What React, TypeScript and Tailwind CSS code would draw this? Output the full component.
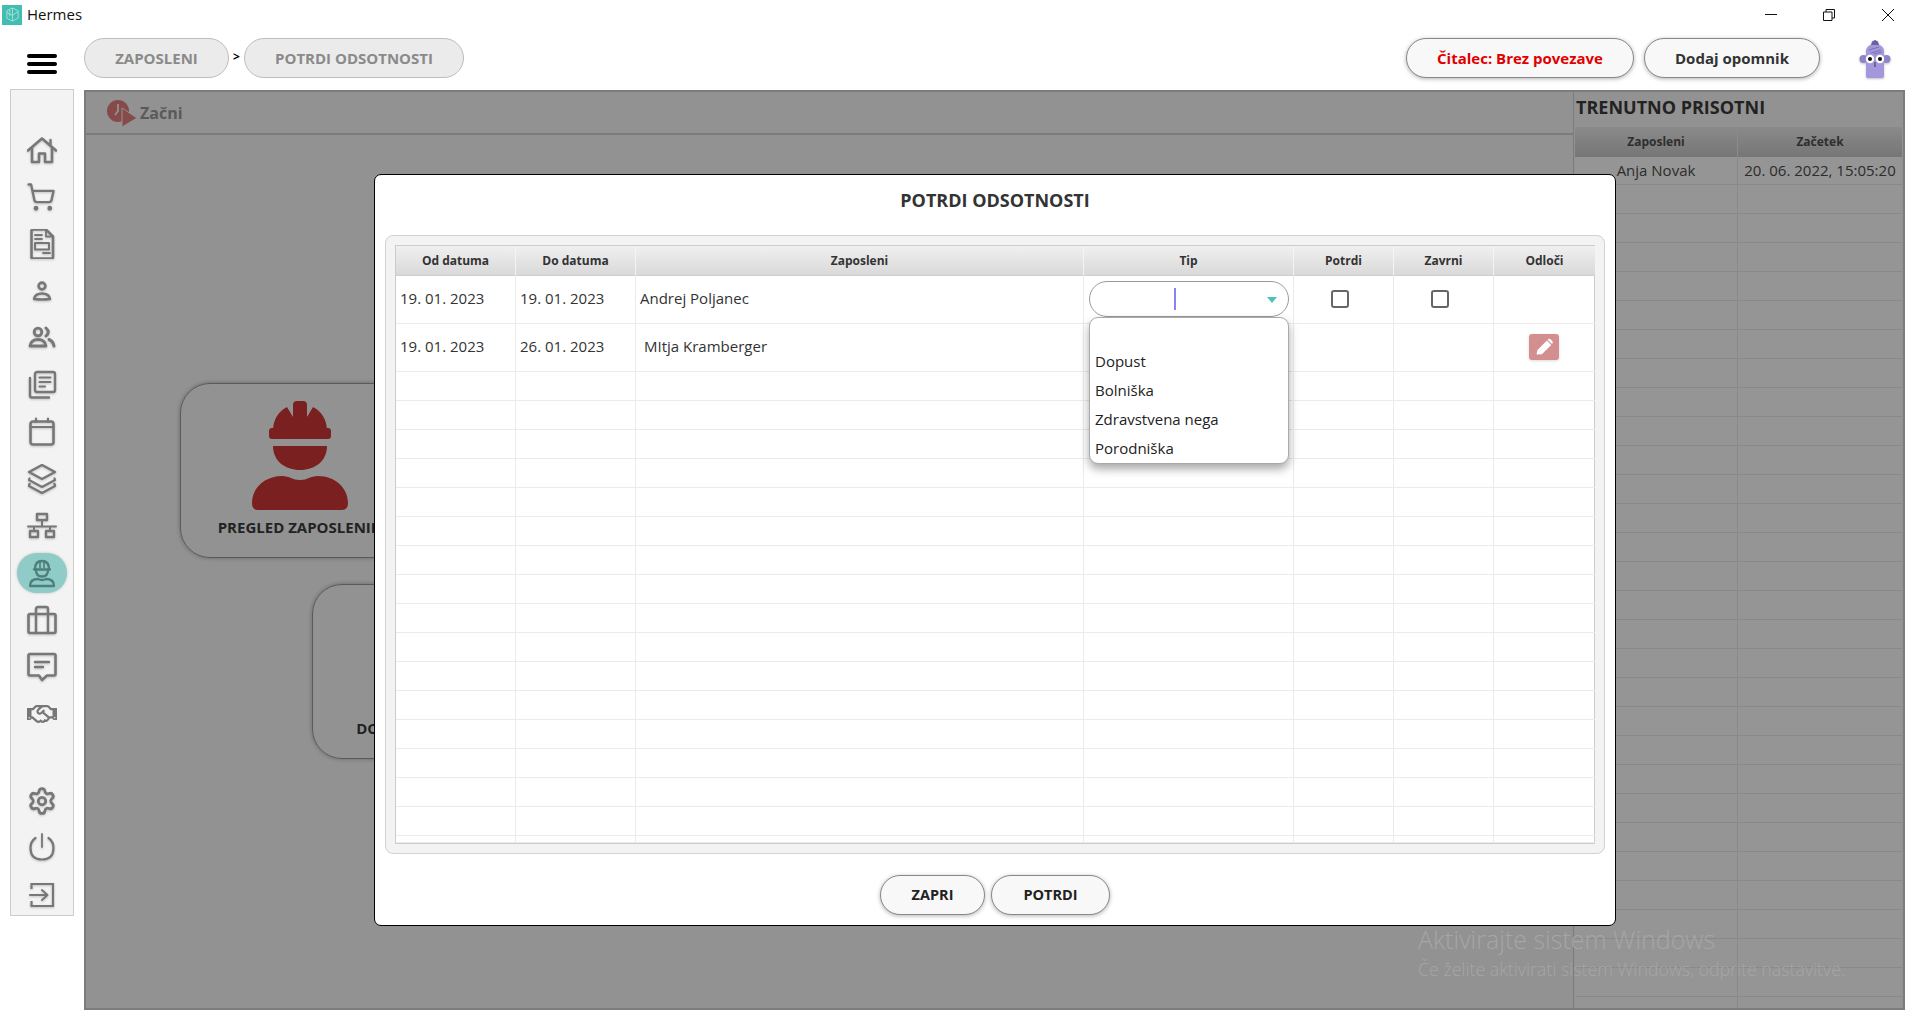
import React from "react";
import { ShoppingCart, Settings } from "lucide-react";
import { FaRegHandshake } from "react-icons/fa";

const ic = "w-[30px] h-[30px] text-[#777777] drop-shadow-[0_1px_1px_rgba(0,0,0,0.2)]";
const S = ({ children }: { children: React.ReactNode }) => (
  <svg viewBox="0 0 30 30" fill="none" stroke="currentColor" strokeWidth="2.4" strokeLinecap="round" strokeLinejoin="round" className={ic}>{children}</svg>
);

const Home = () => (
  <S>
    <path d="M1 15.5L15 3.5L29 15.5" strokeWidth="2.6" />
    <path d="M23.5 5V10" strokeWidth="2.4" />
    <path d="M5 13V27H12V18.5H18V27H25V13" strokeWidth="2.6" />
  </S>
);
const Doc = () => (
  <S>
    <path d="M6 0.5H19L26 7.5V28Q26 29.5 24.5 29.5H6Q4.5 29.5 4.5 28V2Q4.5 0.5 6 0.5Z" strokeWidth="2.6" />
    <path d="M19 1V7.5H25.5M8 6H15M8 10H15M16 24H23" strokeWidth="1.8" />
    <rect x="8" y="14" width="14" height="6.5" strokeWidth="2" />
  </S>
);
const User = () => (
  <S>
    <circle cx="15" cy="10" r="3.4" strokeWidth="2.6" />
    <path d="M7 23Q8 17.5 15 17.5Q22 17.5 23 23Q15 24 7 23Z" strokeWidth="2.4" />
  </S>
);
const Users = () => (
  <S>
    <circle cx="11" cy="9" r="3.8" strokeWidth="2.8" />
    <path d="M19 5Q23.5 9 19 13" strokeWidth="3" />
    <path d="M3 23Q4 16.5 11 16.5Q18 16.5 19 23Z" strokeWidth="2.8" />
    <path d="M22 16.5Q26 18 27 23" strokeWidth="3" />
  </S>
);
const News = () => (
  <S>
    <rect x="8" y="2" width="20" height="20" rx="2" />
    <path d="M12.5 7.5H23.5M12.5 12H23.5M12.5 16.5H18" strokeWidth="2.2" />
    <path d="M3 8V25.5Q3 27.5 5 27.5H22" />
  </S>
);
const Cal = () => (
  <S>
    <rect x="3.5" y="4.5" width="23" height="23" rx="2.5" strokeWidth="2.6" />
    <path d="M3.5 10H26.5M9 1.5V5M21 1.5V5" strokeWidth="2.2" />
  </S>
);
const Layers = () => (
  <S>
    <path d="M15 1L28 8L15 15L2 8Z" />
    <path d="M2.5 14.5L2 16L15 23L28 16L27.5 14.5" strokeWidth="2.2" />
    <path d="M2.5 20L2 22L15 29L28 22L27.5 20" strokeWidth="2.4" />
  </S>
);
const Net = () => (
  <S>
    <rect x="10" y="3" width="10" height="6" strokeWidth="2.4" />
    <rect x="3" y="20" width="8" height="6" strokeWidth="2.4" />
    <rect x="19" y="20" width="8" height="6" strokeWidth="2.4" />
    <path d="M15 9V15.5M1 15.5H29M7 15.5V20M23 15.5V20" strokeWidth="2" />
  </S>
);
const HatUser = () => (
  <svg viewBox="0 0 30 30" fill="none" stroke="#4d7f7c" strokeWidth="2.3" strokeLinecap="round" strokeLinejoin="round" className="w-[30px] h-[30px]">
    <path d="M8 11Q8 3 15 3Q22 3 22 11" />
    <path d="M13 3.5V10M17 3.5V10" strokeWidth="1.6" />
    <path d="M7 11.5H23" />
    <path d="M9 12Q9 18.5 15 18.5Q21 18.5 21 12" />
    <path d="M3 28Q3 21 11 21Q15 23 19 21Q27 21 27 28Z" />
  </svg>
);
const Brief = () => (
  <S>
    <rect x="1.5" y="9" width="27" height="19" rx="1.5" strokeWidth="2.6" />
    <path d="M9 9V4Q9 2 11 2H19Q21 2 21 4V9M9 9V28M21 9V28" strokeWidth="2.4" />
  </S>
);
const Msg = () => (
  <S>
    <path d="M3 2H27Q28.5 2 28.5 3.5V22Q28.5 23.5 27 23.5H20L15 28L12 23.5H3Q1.5 23.5 1.5 22V3.5Q1.5 2 3 2Z" strokeWidth="2.6" />
    <path d="M8 10H22M8 15H16" strokeWidth="2.4" />
  </S>
);
const Power = () => (
  <S>
    <path d="M15 1V14" strokeWidth="1.8" />
    <path d="M8.5 5Q3.5 8.5 3.5 15Q3.5 26.5 15 26.5Q26.5 26.5 26.5 15Q26.5 8.5 21.5 5" strokeWidth="2.2" />
  </S>
);
const Enter = () => (
  <S>
    <path d="M4.5 9V4H26V26H4.5V21" strokeWidth="2.2" strokeLinecap="butt" strokeLinejoin="miter" />
    <path d="M3 15H20M15 10L20.5 15L15 20" strokeWidth="2" />
  </S>
);

const top = [
  <Home key="a" />,
  <ShoppingCart key="b" className={`${ic} -translate-x-[1px]`} strokeWidth={1.9} />,
  <Doc key="c" />,
  <User key="d" />,
  <Users key="e" />,
  <News key="f" />,
  <Cal key="g" />,
  <Layers key="h" />,
  <Net key="i" />,
];
const mid = [<Brief key="j" />, <Msg key="k" />, <FaRegHandshake key="l" className="w-[30px] h-[30px] text-[#777777]" />];
const bottom = [<Settings key="m" className={ic} strokeWidth={2.2} />, <Power key="n" />, <Enter key="o" />];

const Slot = ({ children }: { children: React.ReactNode }) => (
  <div className="h-[47px] shrink-0 flex items-center justify-center">{children}</div>
);

const Sidebar = () => (
  <aside className="w-[64px] h-[827px] shrink-0 ml-[10px] bg-[#f3f3f3] border border-[#cccccc] pt-[36px] flex flex-col">
    {top.map((x) => <Slot key={x.key}>{x}</Slot>)}
    <Slot>
      <div className="w-[50px] h-[40px] rounded-[20px] bg-[#8fcbc7] flex items-center justify-center shadow-[0_0_3px_rgba(0,0,0,0.2)]"><HatUser /></div>
    </Slot>
    {mid.map((x) => <Slot key={x.key}>{x}</Slot>)}
    <div className="h-[40px] shrink-0" />
    {bottom.map((x) => <Slot key={x.key}>{x}</Slot>)}
  </aside>
);

const Helmet = () => (
  <svg viewBox="0 0 96 110" className="w-[96px] h-[110px]" fill="#7b2020">
    <path d="M21 30C21 18 27 10 35 6L41 16V4Q41 0 45 0H51Q55 0 55 4V16L61 6C69 10 75 18 75 30Z" />
    <rect x="17" y="27" width="62" height="11" rx="3" />
    <path d="M21 45H75C75 60 63 69 48 69C33 69 21 60 21 45Z" />
    <path d="M6 109Q0 109 0 102C0 86 14 75 30 75C38 75 40 79 48 79C56 79 58 75 66 75C82 75 96 86 96 102Q96 109 90 109Z" />
  </svg>
);

const Pill = ({ children, w }: { children: React.ReactNode; w: string }) => (
  <div className={`${w} h-[40px] rounded-[20px] bg-[#ebebeb] border border-[#bdbdbd] flex items-center justify-center text-[15px] font-bold text-[#8a8a8a]`}>{children}</div>
);

const Btn = ({ children, cls }: { children: React.ReactNode; cls: string }) => (
  <div className={`${cls} h-[40px] rounded-[20px] bg-[#f8f8f8] border border-[#888888] shadow-[0_1px_4px_rgba(0,0,0,0.3)] flex items-center justify-center font-bold`}>{children}</div>
);

const gridCols = "grid grid-cols-[120px_120px_448px_210px_100px_100px_101px]";
const cell = "border-r border-b border-[#ebebeb] last:border-r-0";

const Head = () => (
  <div className={`${gridCols} h-[30px]`}>
    {["Od datuma", "Do datuma", "Zaposleni", "Tip", "Potrdi", "Zavrni", "Odloči"].map((t) => (
      <div key={t} className="flex items-center justify-center pt-[1px] text-[12px] font-bold text-[#333333] bg-gradient-to-b from-[#f0f0f0] to-[#d9d9d9] border-r border-b border-[#f4f4f4] border-b-[#cfcfcf] last:border-r-0">{t}</div>
    ))}
  </div>
);

const Check = () => <div className="w-[18px] h-[18px] rounded-[3px] border-2 border-[#666666] bg-white" />;

const Row1 = () => (
  <div className={`${gridCols} h-[48px] text-[15px] text-[#333333]`}>
    <div className={`${cell} flex items-center pl-[4px] pb-[2px]`}>19. 01. 2023</div>
    <div className={`${cell} flex items-center pl-[4px] pb-[2px]`}>19. 01. 2023</div>
    <div className={`${cell} flex items-center pl-[4px] pb-[2px]`}>Andrej Poljanec</div>
    <div className={`${cell} relative pl-[5px] pt-[5px]`}>
      <div className="relative w-[200px] h-[36px] rounded-[18px] border border-[#999999] bg-white flex items-center">
        <div className="ml-[84px] w-[2px] h-[22px] bg-[#8585f0]" />
        <svg viewBox="0 0 10 6" className="absolute right-[11px] top-[15px] w-[10px] h-[6px]"><path d="M0 0H10L5 6Z" fill="#4dc4b8" /></svg>
      </div>
      <div className="absolute z-10 left-[5px] top-[41px] w-[200px] h-[147px] rounded-[9px] border border-[#aaaaaa] bg-white shadow-[0_5px_10px_rgba(0,0,0,0.35)] pt-[29px] pl-[5px] text-[15px] text-[#222222]">
        {["Dopust", "Bolniška", "Zdravstvena nega", "Porodniška"].map((o) => (
          <div key={o} className="h-[29px] flex items-center">{o}</div>
        ))}
      </div>
    </div>
    <div className={`${cell} flex items-center pl-[37px] pb-[2px]`}><Check /></div>
    <div className={`${cell} flex items-center pl-[37px] pb-[2px]`}><Check /></div>
    <div className={cell} />
  </div>
);

const Row2 = () => (
  <div className={`${gridCols} h-[48px] text-[15px] text-[#333333]`}>
    <div className={`${cell} flex items-center pl-[4px] pb-[2px]`}>19. 01. 2023</div>
    <div className={`${cell} flex items-center pl-[4px] pb-[2px]`}>26. 01. 2023</div>
    <div className={`${cell} flex items-center pl-[8px] pb-[2px]`}>MItja Kramberger</div>
    <div className={cell} />
    <div className={cell} />
    <div className={cell} />
    <div className={`${cell} flex items-center pl-[35px] pb-[2px]`}>
      <div className="w-[30px] h-[26px] rounded-[3px] bg-[#d38e90] flex items-center justify-center shadow-[0_1px_3px_rgba(0,0,0,0.15)]">
        <svg viewBox="0 0 24 24" className="w-[20px] h-[20px]" fill="#ffffff"><path d="M3 21L4.2 15.6L15.5 4.3L20.7 9.5L9.4 20.8Z" /><path d="M17 2.8Q18.4 1.6 19.8 2.8L22 5Q23.2 6.4 22 7.8L21.6 8.4L16.4 3.4Z" /></svg>
      </div>
    </div>
  </div>
);

const EmptyRow = ({ h }: { h: string }) => (
  <div className={`${gridCols} ${h}`}>
    {[0, 1, 2, 3, 4, 5, 6].map((i) => <div key={i} className={cell} />)}
  </div>
);

const Owl = () => (
  <svg viewBox="0 0 32 38" className="w-[32px] h-[38px] drop-shadow-[0_1px_1px_rgba(0,0,0,0.25)]">
    <circle cx="4.5" cy="19" r="4" fill="#8f84c9" />
    <circle cx="27.5" cy="19" r="4" fill="#8f84c9" />
    <path d="M16 0L19 4Q24 6 25 10V36Q25 38 23 38H9Q7 38 7 36V10Q8 6 13 4Z" fill="#a497dc" />
    <path d="M13 1.5L16 0L19 1.5L20 5H12Z" fill="#6c60a8" />
    <path d="M10 10L20 7M12 13L22 10M15 14L23 12" stroke="#7c70b8" strokeWidth="1" />
    <circle cx="11" cy="19" r="4.2" fill="#ffffff" />
    <circle cx="21" cy="19" r="4.2" fill="#ffffff" />
    <circle cx="11" cy="19" r="2" fill="#111111" />
    <circle cx="21" cy="19" r="2" fill="#111111" />
    <path d="M16 22V27" stroke="#3b3560" strokeWidth="1" />
  </svg>
);

const Logo = () => (
  <div className="w-[20px] h-[20px] bg-[#42bdb1] flex items-center justify-center">
    <svg viewBox="0 0 16 16" className="w-[15px] h-[15px]" fill="none" stroke="#a4e0da" strokeWidth="1">
      <path d="M8 1L14 4V12L8 15L2 12V4Z" />
      <path d="M8 1V15M2 6L8 9L14 5M5 3V10" />
    </svg>
  </div>
);

const Card = ({ label, cls, children }: { label: string; cls: string; children?: React.ReactNode }) => (
  <div className={`${cls} w-[240px] h-[175px] rounded-[30px] border border-[#5a5a5a] shadow-[0_0_4px_rgba(0,0,0,0.3)] flex flex-col items-center justify-end pb-[19px]`}>
    {children}
    <div className="text-[15px] font-bold text-[#222222] mt-[5px] whitespace-nowrap">{label}</div>
  </div>
);

export default function App() {
  return (
    <div className="w-[1917px] h-[1023px] bg-white overflow-hidden font-['Open_Sans',sans-serif]">
      <div className="h-[30px] flex items-center pl-[2px] pb-[1px]">
        <Logo />
        <span className="ml-[5px] text-[15px] text-[#111111]">Hermes</span>
        <div className="ml-auto flex items-center pr-[23px]">
          <svg viewBox="0 0 12 12" className="w-[12px] h-[12px] mr-[46px]" fill="none" stroke="#111111"><path d="M0 5.5H12" /></svg>
          <svg viewBox="0 0 12 12" className="w-[12px] h-[12px] mr-[47px]" fill="none" stroke="#111111"><path d="M0.5 3H9V11.5H0.5ZM3 3V0.5H11.5V9H9" /></svg>
          <svg viewBox="0 0 12 12" className="w-[12px] h-[12px]" fill="none" stroke="#111111"><path d="M0 0L12 12M12 0L0 12" /></svg>
        </div>
      </div>

      <header className="h-[48px] pt-[8px] flex items-start">
        <div className="w-[84px] h-[40px] pl-[27px] flex flex-col justify-center gap-[4px] pt-[12px]">
          <div className="w-[30px] h-[4px] rounded-[2px] bg-black" />
          <div className="w-[30px] h-[4px] rounded-[2px] bg-black" />
          <div className="w-[30px] h-[4px] rounded-[2px] bg-black" />
        </div>
        <Pill w="w-[145px]">ZAPOSLENI</Pill>
        <div className="w-[15px] h-[40px] flex items-center justify-center text-[12px] font-bold text-black pb-[2px]">&gt;</div>
        <Pill w="w-[220px]">POTRDI ODSOTNOSTI</Pill>
        <Btn cls="ml-auto w-[228px] text-[15px] text-[#e00000]">Čitalec: Brez povezave</Btn>
        <Btn cls="ml-[10px] w-[176px] text-[15px] text-[#333333]">Dodaj opomnik</Btn>
        <div className="ml-[39px] mr-[26px] pt-[2px]"><Owl /></div>
      </header>

      <div className="flex items-start pt-[11px]">
        <Sidebar />
        <main className="relative ml-[10px] w-[1821px] h-[920px] mt-[1px] border-2 border-[#7c7c7c] bg-[#929292] flex overflow-hidden">
          <div className="w-[1487px] shrink-0 flex flex-col">
            <div className="h-[43px] shrink-0 border-b-2 border-[#7c7c7c] pl-[20px] flex items-center">
              <svg viewBox="0 0 32 28" className="w-[32px] h-[28px] mt-[2px]">
                <circle cx="12" cy="11" r="11" fill="#864a4b" />
                <path d="M12 4V11L9 15" stroke="#929292" strokeWidth="1.8" fill="none" />
                <path d="M16 8L31 18L16 27Z" fill="#864a4b" stroke="#929292" strokeWidth="1" />
              </svg>
              <span className="ml-[2px] text-[16px] font-bold text-[#5a5a5a]">Začni</span>
            </div>
            <div className="pl-[94px] pt-[248px] flex flex-col gap-[26px]">
              <Card label="PREGLED ZAPOSLENIH" cls="shrink-0"><Helmet /></Card>
              <Card label="DOGODKI DELAVCEV" cls="ml-[132px] shrink-0" />
            </div>
          </div>

          <div className="flex-1 border-l border-[#7c7c7c] flex flex-col">
            <div className="h-[35px] shrink-0 pl-[2px] pb-[5px] flex items-center text-[18px] font-bold text-[#222222]">TRENUTNO PRISOTNI</div>
            <div className="pl-[1px] pr-[1px] flex-1 overflow-hidden">
              <div className="grid grid-cols-[163px_164px] h-[30px] text-[12px] font-bold text-[#2e2e2e]">
                <div className="flex items-center justify-center bg-gradient-to-b from-[#8a8a8a] to-[#767676] border-r border-[#8c8c8c]">Zaposleni</div>
                <div className="flex items-center justify-center bg-gradient-to-b from-[#8a8a8a] to-[#767676]">Začetek</div>
              </div>
              <div className="grid grid-cols-[163px_164px] h-[28px] text-[15px] text-[#2c2c2c] bg-[#959595]">
                <div className="flex items-center justify-center border-r border-b border-[#898989]">Anja Novak</div>
                <div className="flex items-center justify-center border-b border-[#898989] whitespace-nowrap">20. 06. 2022, 15:05:20</div>
              </div>
              {Array.from({ length: 29 }).map((_, i) => (
                <div key={i} className="grid grid-cols-[163px_164px] h-[29px] bg-[#959595]">
                  <div className="border-r border-b border-[#898989]" />
                  <div className="border-b border-[#898989]" />
                </div>
              ))}
            </div>
          </div>

          <div className="absolute left-[1332px] top-[831px] text-[#a6a6a6] pointer-events-none whitespace-nowrap">
            <div className="text-[25px] font-light leading-[32px]">Aktivirajte sistem Windows</div>
            <div className="text-[17.8px] font-light leading-[24px] mt-[2px]">Če želite aktivirati sistem Windows, odprite nastavitve.</div>
          </div>

          <section className="absolute left-[288px] top-[82px] w-[1242px] h-[752px] rounded-[7px] border border-black bg-white flex flex-col px-[10px]">
            <div className="h-[60px] shrink-0 flex items-center justify-center text-[18px] font-bold text-[#333333] pb-[9px]">POTRDI ODSOTNOSTI</div>
            <div className="h-[619px] shrink-0 rounded-[8px] bg-[#f3f3f3] border border-[#d2d2d2] p-[9px]">
              <div className="h-[599px] bg-white border border-[#cccccc]">
                <Head />
                <Row1 />
                <Row2 />
                {Array.from({ length: 16 }).map((_, i) => <EmptyRow key={i} h="h-[29px]" />)}
                <EmptyRow h="h-[7px]" />
              </div>
            </div>
            <div className="pt-[21px] flex justify-center gap-[6px]">
              <Btn cls="w-[105px] text-[14.5px] text-[#222222]">ZAPRI</Btn>
              <Btn cls="w-[119px] text-[14.5px] text-[#222222]">POTRDI</Btn>
            </div>
          </section>
        </main>
      </div>
    </div>
  );
}
